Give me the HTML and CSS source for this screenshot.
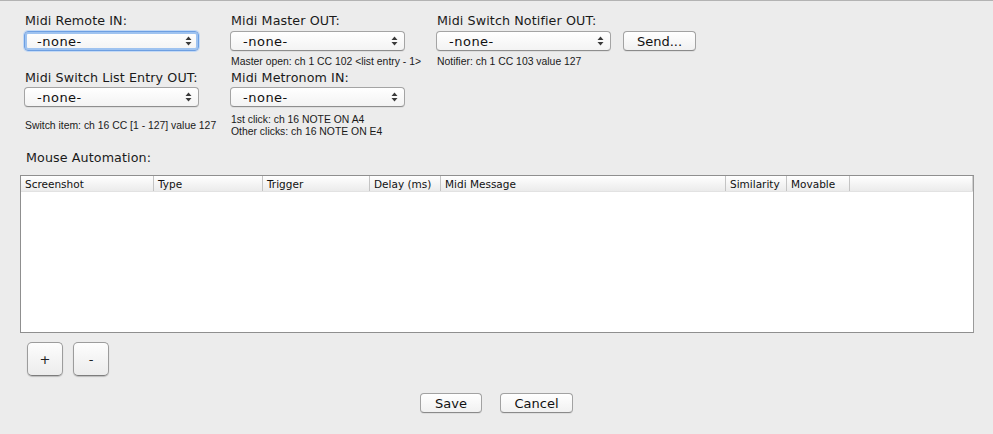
FILE: index.html
```html
<!DOCTYPE html>
<html>
<head>
<meta charset="utf-8">
<link rel="stylesheet" href="styles.css">
</head>
<body>
<div class="window">
  <div class="ports">
    <div class="lbl c1 r1">Midi Remote IN:</div>
    <div class="lbl c2 r1">Midi Master OUT:</div>
    <div class="lbl c3 r1">Midi Switch Notifier OUT:</div>

    <div class="c1 r2"><div class="popup focus"><span>-none-</span><svg class="arr" width="7" height="10" viewBox="0 0 7 10"><path d="M3.5 0.5 L6.5 4 L0.5 4 Z M3.5 9.5 L6.5 6 L0.5 6 Z" fill="#3a3a3a"/></svg></div></div>
    <div class="c2 r2"><div class="popup"><span>-none-</span><svg class="arr" width="7" height="10" viewBox="0 0 7 10"><path d="M3.5 0.5 L6.5 4 L0.5 4 Z M3.5 9.5 L6.5 6 L0.5 6 Z" fill="#3a3a3a"/></svg></div></div>
    <div class="c3 r2 sendrow"><div class="popup"><span>-none-</span><svg class="arr" width="7" height="10" viewBox="0 0 7 10"><path d="M3.5 0.5 L6.5 4 L0.5 4 Z M3.5 9.5 L6.5 6 L0.5 6 Z" fill="#3a3a3a"/></svg></div><div class="btn send">Send...</div></div>

    <div class="hint c2 r3">Master open: ch 1 CC 102 &lt;list entry - 1&gt;</div>
    <div class="hint c3 r3">Notifier: ch 1 CC 103 value 127</div>

    <div class="lbl c1 r4">Midi Switch List Entry OUT:</div>
    <div class="lbl c2 r4">Midi Metronom IN:</div>

    <div class="c1 r5"><div class="popup"><span>-none-</span><svg class="arr" width="7" height="10" viewBox="0 0 7 10"><path d="M3.5 0.5 L6.5 4 L0.5 4 Z M3.5 9.5 L6.5 6 L0.5 6 Z" fill="#3a3a3a"/></svg></div></div>
    <div class="c2 r5"><div class="popup"><span>-none-</span><svg class="arr" width="7" height="10" viewBox="0 0 7 10"><path d="M3.5 0.5 L6.5 4 L0.5 4 Z M3.5 9.5 L6.5 6 L0.5 6 Z" fill="#3a3a3a"/></svg></div></div>

    <div class="hint c1 r6 mid">Switch item: ch 16 CC [1 - 127] value 127</div>
    <div class="hint c2 r6 two"><div>1st click: ch 16 NOTE ON A4</div><div>Other clicks: ch 16 NOTE ON E4</div></div>
  </div>

  <div class="lbl section">Mouse Automation:</div>

  <div class="table">
    <div class="thead">
      <div class="th w1">Screenshot</div>
      <div class="th w2">Type</div>
      <div class="th w3">Trigger</div>
      <div class="th w4">Delay (ms)</div>
      <div class="th w5">Midi Message</div>
      <div class="th w6">Similarity</div>
      <div class="th w7">Movable</div>
      <div class="th w8"></div>
    </div>
    <div class="tbody"></div>
  </div>

  <div class="pm">
    <div class="sq">+</div>
    <div class="sq">-</div>
  </div>

  <div class="actions">
    <div class="btn save">Save</div>
    <div class="btn cancel">Cancel</div>
  </div>
</div>
</body>
</html>
```

FILE: styles.css
```css
* { box-sizing: border-box; }
html, body {
  margin: 0;
  padding: 0;
}
body {
  width: 993px;
  height: 434px;
  overflow: hidden;
  background: #ececec;
  font-family: "DejaVu Sans", "Liberation Sans", sans-serif;
  color: #1a1a1a;
}
.window {
  height: 434px;
  border-top: 1px solid #b3b3b3;
  display: flex;
  flex-direction: column;
}
.ports {
  display: grid;
  grid-template-columns: 206px 206px auto;
  grid-template-rows: 18px 22px 17px 18px 22px auto;
  padding: 11px 0 0 24px;
}
.c1 { grid-column: 1; }
.c2 { grid-column: 2; }
.c3 { grid-column: 3; }
.r1 { grid-row: 1; }
.r2 { grid-row: 2; }
.r3 { grid-row: 3; }
.r4 { grid-row: 4; }
.r5 { grid-row: 5; }
.r6 { grid-row: 6; }

.lbl {
  font-size: 12.7px;
  line-height: 18px;
  padding-left: 1px;
  white-space: nowrap;
  letter-spacing: 0.1px;
}
.hint {
  font-family: "Liberation Sans", Arial, sans-serif;
  font-size: 10.4px;
  line-height: 12px;
  color: #1a1a1a;
  white-space: nowrap;
  padding-left: 1px;
}
.r3.hint { padding-top: 4px; }
.two { padding-top: 5px; }
.mid { align-self: center; padding-top: 5px; }

.popup {
  width: 175px;
  height: 20px;
  margin-top: 1px;
  border: 1px solid #a4a4a4;
  border-bottom-color: #8e8e8e;
  border-radius: 4px;
  background: linear-gradient(#ffffff, #f3f3f3);
  box-shadow: 0 1px 0 rgba(0,0,0,0.06);
  display: flex;
  align-items: center;
  justify-content: space-between;
  padding: 0 6px 0 12px;
  font-size: 13px;
  letter-spacing: 0.5px;
  color: #111;
}
.r5 .popup { margin-top: 0; }
.popup.focus {
  border-color: #6d9fe2;
  box-shadow: inset 0 0 0 2px #9fc3f0, 0 0 0 1px #c3d9f5;
}
.arr { display: block; }

.sendrow {
  display: flex;
  gap: 12px;
}
.btn {
  border: 1px solid #a2a2a2;
  border-bottom-color: #8a8a8a;
  border-radius: 4px;
  background: linear-gradient(#ffffff, #f1f1f1);
  box-shadow: 0 1px 0 rgba(0,0,0,0.06);
  font-size: 13px;
  display: flex;
  align-items: center;
  justify-content: center;
  height: 20px;
  color: #111;
}
.send {
  width: 73px;
  margin-top: 1px;
}

.section {
  margin: 11px 0 0 25px;
}

.table {
  margin: 8px 0 0 20px;
  width: 954px;
  height: 158px;
  border: 1px solid #8f8f8f;
  border-right-color: #9a9a9a;
  background: #fff;
  display: flex;
  flex-direction: column;
}
.thead {
  display: flex;
  height: 16px;
  background: linear-gradient(#ffffff, #ebebeb);
  border-bottom: 1px solid #e2e2e2;
}
.th {
  border-right: 1px solid #c4c4c4;
  font-size: 10.5px;
  line-height: 16px;
  padding-left: 4px;
  white-space: nowrap;
  color: #111;
  flex: none;
}
.w1 { width: 133px; padding-left: 4px; }
.w2 { width: 109px; }
.w3 { width: 107px; }
.w4 { width: 71px; }
.w5 { width: 285px; }
.w6 { width: 61px; }
.w7 { width: 63px; }
.w8 { width: 123px; border-right-color: #d0d0d0; }
.tbody { flex: 1; }

.pm {
  display: flex;
  gap: 10px;
  margin: 9px 0 0 27px;
}
.sq {
  width: 36px;
  height: 34px;
  border: 1px solid #9c9c9c;
  border-bottom-color: #7d7d7d;
  border-radius: 5px;
  background: linear-gradient(#fdfdfd, #ececec);
  box-shadow: 0 1px 1px rgba(0,0,0,0.2);
  display: flex;
  align-items: center;
  justify-content: center;
  font-size: 13px;
  color: #222;
}

.actions {
  display: flex;
  justify-content: center;
  gap: 18px;
  margin-top: 17px;
}
.save { width: 62px; }
.cancel { width: 73px; }
```
